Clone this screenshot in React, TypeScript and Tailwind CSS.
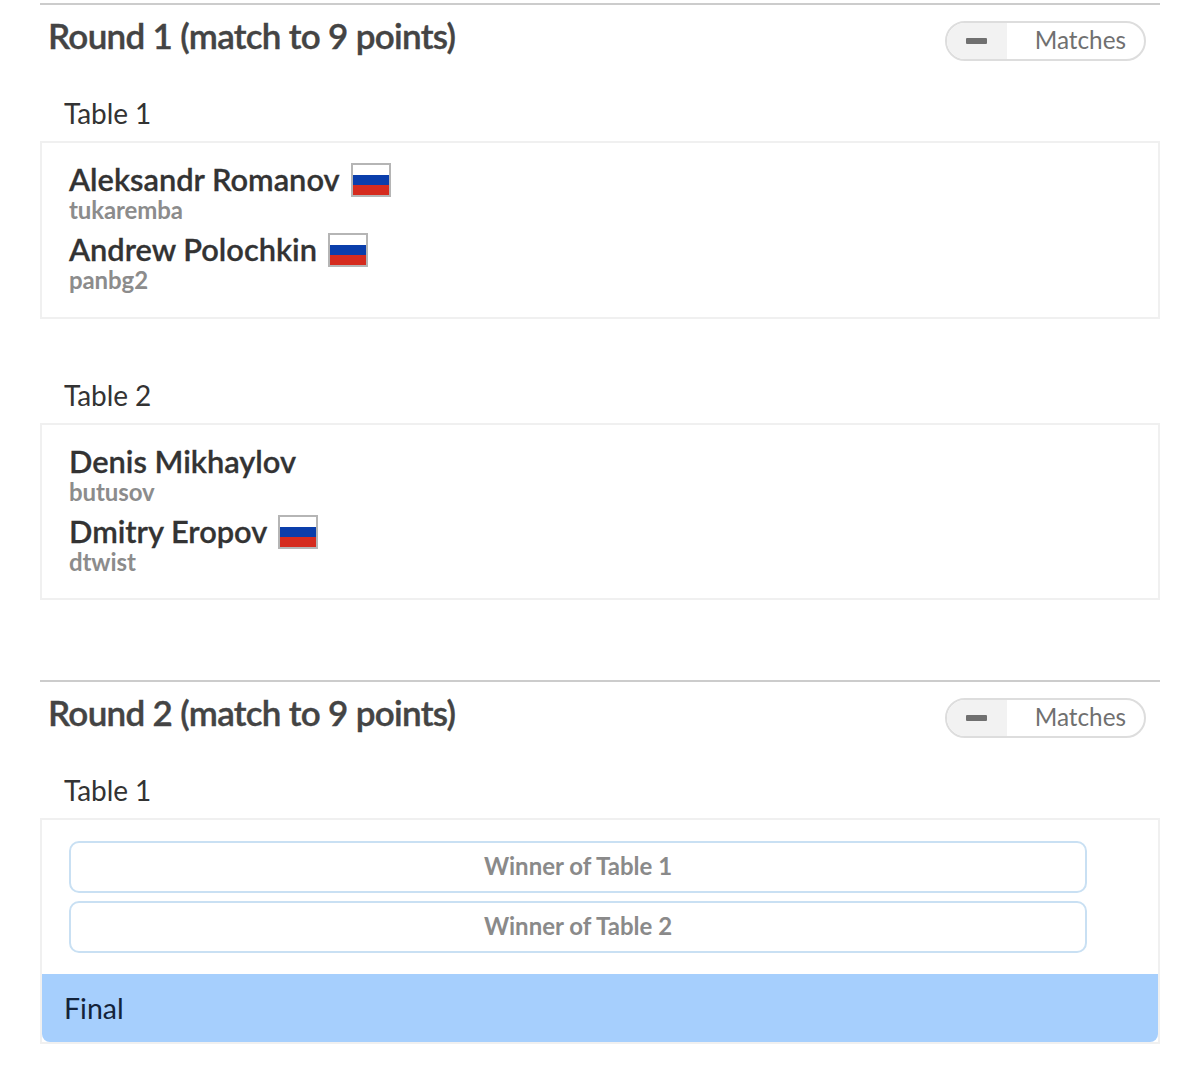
const lato = { fontFamily: "Lato, 'Noto Sans', sans-serif" };

function Flag() {
  return (
    <span className="ml-[11px] inline-flex h-[34px] w-[40px] flex-col border-2 border-[#b5b5b5]">
      <span className="flex-1 bg-white" />
      <span className="flex-1 bg-[#0a3eab]" />
      <span className="flex-1 bg-[#d52b1e]" />
    </span>
  );
}

function Player({ name, nick, flag }: { name: string; nick: string; flag?: boolean }) {
  return (
    <div className="h-[70px]">
      <div className="flex h-[36px] items-center text-[#333333]">
        <span className="text-[30.8px] leading-[30px] font-semibold [-webkit-text-stroke:0.3px]">{name}</span>
        {flag && <Flag />}
      </div>
      <div className="mt-[2px] text-[24px] leading-[20px] font-bold tracking-[-0.1px] text-[#8c8c8c]">{nick}</div>
    </div>
  );
}

function RoundHeader({ title }: { title: string }) {
  return (
    <div className="flex h-[75px] justify-between border-t-2 border-[#cccccc] pr-[14px] pl-2">
      <h2 className="pt-[8px] text-[35px] leading-[44px] font-semibold tracking-[-0.7px] text-[#444444] [-webkit-text-stroke:0.4px]">{title}</h2>
      <div className="mt-[16px] flex h-[40px] w-[201px] overflow-hidden rounded-full border-2 border-[#dddddd] text-[#707070]">
        <div className="flex w-[60px] items-center justify-center bg-[#f2f2f2]">
          <span className="h-[6px] w-[21px] -translate-x-[1px] rounded-[1px] bg-[#707070]" />
        </div>
        <div className="flex flex-1 items-center justify-end pr-[18px] pb-[2px] text-[24.3px]">Matches</div>
      </div>
    </div>
  );
}

function TableLabel({ children }: { children: string }) {
  return <div className="-mt-px pb-px pl-6 text-[28px] leading-[36px] tracking-[-0.1px] text-[#333333]">{children}</div>;
}

function WinnerBox({ children }: { children: string }) {
  return (
    <div className="flex h-[52px] w-[1018px] items-center justify-center rounded-[10px] border-2 border-[#c9e0f3] pb-[2px] text-[24px] font-bold text-[#8a8a8a]">
      {children}
    </div>
  );
}

export default function App() {
  return (
    <div className="h-[1066px] bg-white px-10 pt-[3px]" style={lato}>
      <RoundHeader title="Round 1 (match to 9 points)" />
      <div className="mt-[18px]">
        <TableLabel>Table 1</TableLabel>
      </div>
      <div className="mt-[9px] h-[178px] border-2 border-[#f0f0f0] pt-[19px] pl-[27px]">
        <Player name="Aleksandr Romanov" nick="tukaremba" flag />
        <Player name="Andrew Polochkin" nick="panbg2" flag />
      </div>
      <div className="mt-[59px]">
        <TableLabel>Table 2</TableLabel>
      </div>
      <div className="mt-[9px] h-[177px] border-2 border-[#f0f0f0] pt-[19px] pl-[27px]">
        <Player name="Denis Mikhaylov" nick="butusov" />
        <Player name="Dmitry Eropov" nick="dtwist" flag />
      </div>

      <div className="mt-[80px]">
        <RoundHeader title="Round 2 (match to 9 points)" />
      </div>
      <div className="mt-[18px]">
        <TableLabel>Table 1</TableLabel>
      </div>
      <div className="mt-[9px] flex h-[226px] flex-col border-2 border-[#f0f0f0]">
        <div className="flex flex-1 flex-col gap-2 pt-[21px] pl-[27px]">
          <WinnerBox>Winner of Table 1</WinnerBox>
          <WinnerBox>Winner of Table 2</WinnerBox>
        </div>
        <div className="flex h-[68px] items-center rounded-b-lg bg-[#a6cffd] pl-[22px] text-[28.5px] text-[#14233a]">
          Final
        </div>
      </div>
    </div>
  );
}
